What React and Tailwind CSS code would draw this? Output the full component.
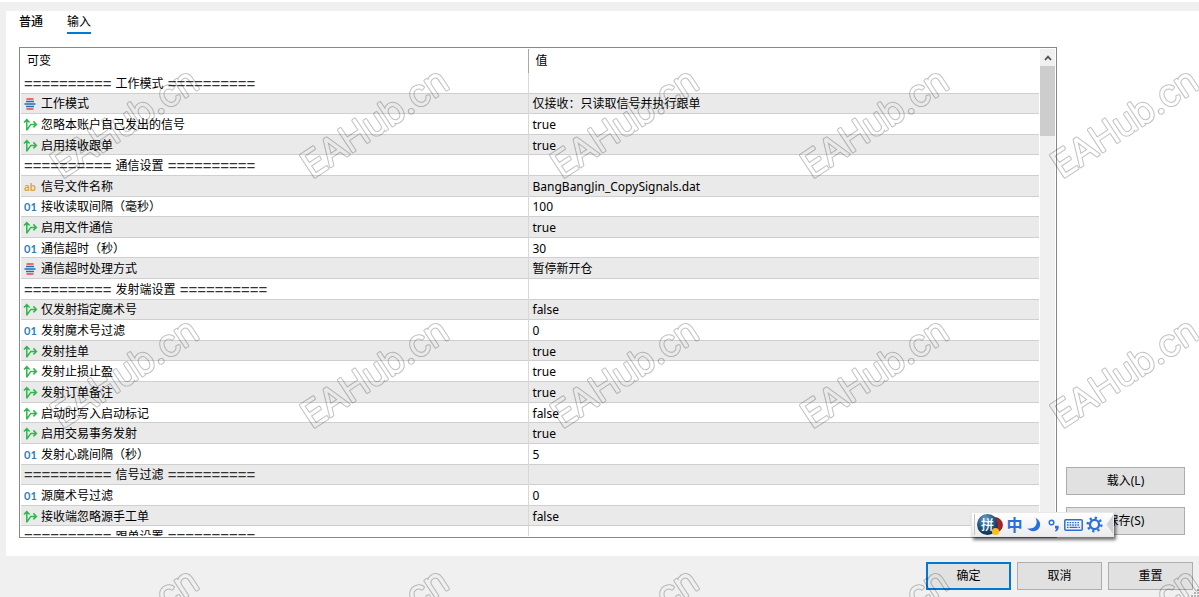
const rows = [
  { type: 'group', name: '工作模式', value: '' },
  { type: 'enum', name: '工作模式', value: '仅接收：只读取信号并执行跟单' },
  { type: 'bool', name: '忽略本账户自己发出的信号', value: 'true' },
  { type: 'bool', name: '启用接收跟单', value: 'true' },
  { type: 'group', name: '通信设置', value: '' },
  { type: 'string', name: '信号文件名称', value: 'BangBangJin_CopySignals.dat' },
  { type: 'int', name: '接收读取间隔（毫秒）', value: '100' },
  { type: 'bool', name: '启用文件通信', value: 'true' },
  { type: 'int', name: '通信超时（秒）', value: '30' },
  { type: 'enum', name: '通信超时处理方式', value: '暂停新开仓' },
  { type: 'group', name: '发射端设置', value: '' },
  { type: 'bool', name: '仅发射指定魔术号', value: 'false' },
  { type: 'int', name: '发射魔术号过滤', value: '0' },
  { type: 'bool', name: '发射挂单', value: 'true' },
  { type: 'bool', name: '发射止损止盈', value: 'true' },
  { type: 'bool', name: '发射订单备注', value: 'true' },
  { type: 'bool', name: '启动时写入启动标记', value: 'false' },
  { type: 'bool', name: '启用交易事务发射', value: 'true' },
  { type: 'int', name: '发射心跳间隔（秒）', value: '5' },
  { type: 'group', name: '信号过滤', value: '' },
  { type: 'int', name: '源魔术号过滤', value: '0' },
  { type: 'bool', name: '接收端忽略源手工单', value: 'false' },
  { type: 'group', name: '跟单设置', value: '' },
];

function TypeIcon({ type }) {
  if (type === 'bool') {
    return (
      <svg className="h-3 w-3 shrink-0 overflow-visible" viewBox="0 0 12 12" fill="none" stroke="#2fb84c" strokeWidth="1.5">
        <path d="M2.8 11.5V0.5M0 3.5L2.8 0.5L5.6 3.5M3 10.7L6.8 5.4H12.2M9.4 2.4L12.4 5.4L9.4 8.4" />
      </svg>
    );
  }
  if (type === 'enum') {
    return (
      <svg className="h-3 w-3 shrink-0" viewBox="0 0 12 12">
        <path d="M2.5 1h7M2.5 11h7" stroke="#e8433d" strokeWidth="1.3" />
        <path d="M2 3.5h8M0.5 6h11M2 8.5h8" stroke="#1f6fb5" strokeWidth="1.3" />
      </svg>
    );
  }
  if (type === 'int') {
    return <span className="w-3 shrink-0 font-['Lato'] text-[11px] font-bold leading-3 text-[#2f7fb8]">01</span>;
  }
  return <span className="w-3 shrink-0 font-['Noto_Sans'] text-[10px] font-semibold leading-3 text-[#dba23c]">ab</span>;
}

function GroupTitle({ name }) {
  return (
    <div className="flex items-center gap-1 px-[3px]">
      <span className="font-['Liberation_Sans'] text-[15px] leading-4 text-[#333]">==========</span>
      <span>{name}</span>
      <span className="font-['Liberation_Sans'] text-[15px] leading-4 text-[#333]">==========</span>
    </div>
  );
}

function InputsTable() {
  return (
    <table className="h-[498px] w-full table-fixed border-collapse text-left">
      <thead>
        <tr className="h-6">
          <th className="w-[507px] border-r border-[#a8a8a8] p-0 px-[6px] font-normal">可变</th>
          <th className="p-0 px-[7px] font-normal">值</th>
        </tr>
      </thead>
      <tbody>
        {rows.map((row, i) => (
          <tr key={i} className="border-b border-[#cfcfcf] even:bg-[#eaeaea]">
            <td className="border-r border-[#d8d8d8] p-0 pt-[2px]">
              {row.type === 'group' ? (
                <GroupTitle name={row.name} />
              ) : (
                <div className="flex items-center gap-[5px] px-[3px]">
                  <TypeIcon type={row.type} />
                  <span>{row.name}</span>
                </div>
              )}
            </td>
            <td className="p-0 px-1 pt-[2px]">{row.value}</td>
          </tr>
        ))}
      </tbody>
    </table>
  );
}

function Scrollbar() {
  return (
    <div className="mr-px flex w-[15px] shrink-0 flex-col bg-[#f0f0f0]">
      <button aria-label="向上滚动" className="flex h-[17px] items-center justify-center">
        <svg className="h-2 w-2" viewBox="0 0 8 8" fill="none" stroke="#505050" strokeWidth="1.8">
          <path d="M1 6L4 2.6L7 6" />
        </svg>
      </button>
      <div className="h-[70px] bg-[#cdcdcd]"></div>
    </div>
  );
}

function DialogButton({ children, className }) {
  return (
    <button className={`h-7 border bg-[#e1e1e1] text-center ${className}`}>{children}</button>
  );
}

// Floating input method bar
function ImeBar() {
  return (
    <div className="absolute right-[85px] bottom-[60px] flex h-[25px] w-[143px] items-center gap-[3px] border border-[#e8e8e8] bg-linear-to-b from-white to-[#ececec] pl-[2px] shadow-[2px_3px_3px_rgba(0,0,0,0.55)]">
      <div className="h-[21px] w-px bg-[#c4c4c4]"></div>
      <svg className="-ml-[2px] h-6 w-[27px] shrink-0" viewBox="0 0 27 24">
        <defs>
          <radialGradient id="ball" cx="0.4" cy="0.25" r="0.8">
            <stop offset="0" stopColor="#6ea3c4" />
            <stop offset="0.5" stopColor="#245a85" />
            <stop offset="1" stopColor="#0d2740" />
          </radialGradient>
        </defs>
        <circle cx="19" cy="12" r="7.5" fill="#b3201f" stroke="#4a1010" strokeWidth="0.6" />
        <circle cx="11.5" cy="11.5" r="10.5" fill="url(#ball)" />
        <text x="11.5" y="16" textAnchor="middle" fontSize="13" fontWeight="500" fill="#fff" fontFamily="Noto Sans CJK SC, sans-serif">拼</text>
        <circle cx="19.5" cy="18.5" r="3.6" fill="#f8c019" />
      </svg>
      <button className="w-[17px] shrink-0 text-base leading-5 font-bold text-[#2a6fdc]">中</button>
      <button aria-label="半角">
        <svg className="h-4 w-4" viewBox="0 0 16 16" fill="#2a6fdc">
          <path d="M9.5 1C14 3 15.5 7.5 13 11.3C10.3 15 4.5 15.2 1.3 11.3C5 12.2 8.3 11 9.8 8.3C11.1 6 10.9 3.3 9.5 1Z" />
        </svg>
      </button>
      <button aria-label="标点">
        <svg className="h-4 w-4" viewBox="0 0 16 16">
          <circle cx="6.5" cy="5.5" r="2.3" fill="none" stroke="#2a6fdc" strokeWidth="1.5" />
          <path d="M10 8.8h3.6c.6 2.8-.6 5.2-3 6l-.6-1.2c.9-.5 1.3-1.1 1.3-2h-1.3z" fill="#2a6fdc" />
        </svg>
      </button>
      <button aria-label="软键盘">
        <svg className="h-3 w-[19px]" viewBox="0 0 19 12" fill="none" stroke="#2a6fdc">
          <rect x="0.8" y="0.8" width="17.4" height="10.4" rx="1" strokeWidth="1.5" />
          <path d="M3 3.7h13M3 6h13" strokeWidth="1.3" strokeDasharray="1.6 1" />
          <path d="M3 8.4h1.5M5.5 8.4h8M14.5 8.4H16" strokeWidth="1.3" />
        </svg>
      </button>
      <button aria-label="设置">
        <svg className="h-[17px] w-[17px]" viewBox="0 0 18 18" fill="none" stroke="#2a6fdc">
          <circle cx="9" cy="9" r="4.8" strokeWidth="2.4" />
          <circle cx="9" cy="9" r="7.2" strokeWidth="2.6" strokeDasharray="2.4 3.255" />
        </svg>
      </button>
      <svg className="absolute right-0 h-full w-[7px]" viewBox="0 0 7 24" preserveAspectRatio="none">
        <path d="M7 2L0.5 12L7 22Z" fill="#d2d2d2" />
      </svg>
    </div>
  );
}

function Watermark() {
  const text = {
    fontFamily: 'Inter, sans-serif',
    fontSize: 36,
    fontWeight: 300,
    strokeLinejoin: 'round',
  };
  return (
    <svg className="pointer-events-none absolute inset-0 h-full w-full" aria-hidden="true">
      <defs>
        <mask id="outline" maskUnits="userSpaceOnUse" x="-10" y="-40" width="190" height="60">
          <text {...text} fill="#fff" stroke="#fff" strokeWidth="3">EAHub.cn</text>
          <text {...text} fill="#000" stroke="#000" strokeWidth="1">EAHub.cn</text>
        </mask>
        <pattern id="tile" x="40" y="0" width="250" height="250" patternUnits="userSpaceOnUse">
          <g transform="translate(22 177) rotate(-33.5)">
            <rect x="-10" y="-40" width="190" height="60" fill="#000" fillOpacity="0.24" mask="url(#outline)" />
          </g>
        </pattern>
      </defs>
      <rect width="100%" height="100%" fill="url(#tile)" />
    </svg>
  );
}

export default function App() {
  return (
    <div className="relative flex h-screen flex-col overflow-hidden border-t-2 border-white bg-[#f0f0f0] pt-[9px] font-['Noto_Sans','Noto_Sans_CJK_SC',sans-serif] text-xs leading-4 text-black">
      <main className="ml-[6px] flex min-h-0 flex-1 flex-col bg-white pr-[14px] pb-[18px] pl-[13px]">
        <div role="tablist" className="flex h-9 items-start gap-6 pt-[2px]">
          <button role="tab" aria-selected="false" className="h-[21px] border-b-2 border-transparent pb-px font-medium">普通</button>
          <button role="tab" aria-selected="true" className="h-[21px] border-b-2 border-[#0078d7] pb-px">输入</button>
        </div>
        <div className="flex min-h-0 flex-1 gap-[9px]">
          <div className="flex min-w-0 flex-1 gap-px overflow-hidden border border-[#828790] p-px pr-0">
            <div className="min-w-0 flex-1 overflow-hidden">
              <InputsTable />
            </div>
            <Scrollbar />
          </div>
          <div className="flex w-[119px] shrink-0 flex-col justify-end gap-3 pb-[3px]">
            <DialogButton className="border-[#adadad]">载入(L)</DialogButton>
            <DialogButton className="border-[#adadad]">保存(S)</DialogButton>
          </div>
        </div>
      </main>
      <footer className="flex h-[41px] shrink-0 justify-end gap-[6px] pt-[6px] pr-[6px]">
        <DialogButton className="w-[85px] border-2 border-[#0078d7]">确定</DialogButton>
        <DialogButton className="w-[85px] border-[#adadad]">取消</DialogButton>
        <DialogButton className="w-[85px] border-[#adadad]">重置</DialogButton>
      </footer>
      <svg className="absolute right-0 bottom-0 h-2 w-2" viewBox="0 0 8 8" fill="#b4b4b4">
        <path d="M6 0h2v2H6zM3 3h2v2H3zM6 3h2v2H6zM0 6h2v2H0zM3 6h2v2H3zM6 6h2v2H6z" />
      </svg>
      <ImeBar />
      <Watermark />
    </div>
  );
}
